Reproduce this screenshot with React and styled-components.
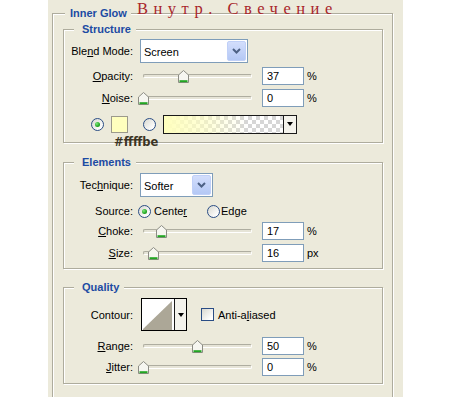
import React from 'react';
import styled, { createGlobalStyle } from 'styled-components';

const BG = '#ECEADB';

const GlobalStyle = createGlobalStyle`
  html, body { margin: 0; padding: 0; background: #fff; overflow: hidden; }
  body {
    font-family: "Liberation Sans", Arial, sans-serif;
    font-size: 11px;
    color: #000;
  }
`;

const Panel = styled.div`
  position: relative;
  margin-left: 48px;
  width: 355px;
  height: 397px;
  box-sizing: border-box;
  padding: 6px 10px 0 4px;
  background: ${BG};
  overflow: hidden;
`;

const OuterGroup = styled.fieldset`
  margin: 0;
  min-width: 0;
  padding: 0 9px 40px 10px;
  border: 1px solid #aeac9d;
  box-shadow: inset 1px 1px 0 #fff, 1px 1px 0 #fff;
`;

const Group = styled.fieldset`
  margin: ${p => p.$mt}px 0 0 0;
  min-width: 0;
  padding: ${p => p.$pt}px 0 ${p => p.$pb}px 0;
  border: 1px solid #aeac9d;
  box-shadow: inset 1px 1px 0 #fff, 1px 1px 0 #fff;
`;

const Legend = styled.legend`
  margin-left: ${p => p.$ml}px;
  padding: 0 ${p => p.$pr}px 0 ${p => p.$pl}px;
  font-weight: bold;
  font-size: 11px;
  line-height: 14px;
  color: #1c4ba3;
  background: ${BG};
`;

const RedNote = styled.div`
  position: absolute;
  left: 89px;
  top: 0;
  font-family: "Liberation Serif", "Times New Roman", serif;
  font-size: 16.5px;
  line-height: 18.5px;
  letter-spacing: 5.5px;
  color: #a8262b;
  white-space: nowrap;
`;

const HexNote = styled.div`
  position: absolute;
  left: 66px;
  top: 136px;
  font-family: "DejaVu Sans", Verdana, sans-serif;
  font-weight: bold;
  font-size: 11.5px;
  line-height: 13px;
  color: #3b3424;
  white-space: nowrap;
`;

const Row = styled.div`
  display: flex;
  align-items: center;
  height: ${p => p.$h || 18}px;
  margin-top: ${p => p.$mt || 0}px;
  padding-left: ${p => p.$indent || 0}px;
`;

const Label = styled.span`
  flex: none;
  width: 69px;
  margin-right: ${p => (p.$gap === undefined ? 7 : p.$gap)}px;
  text-align: right;
  white-space: nowrap;
`;

const U = styled.span`
  text-decoration: underline;
`;

const Select = styled.div`
  flex: none;
  display: flex;
  width: ${p => p.$w}px;
  height: 24px;
  box-sizing: border-box;
  border: 1px solid #7f9db9;
  background: #fff;
  padding: 1px;
`;

const SelectText = styled.span`
  flex: 1;
  display: flex;
  align-items: center;
  padding-left: 2px;
  padding-top: 1px;
`;

const DropBtn = styled.span`
  flex: none;
  width: 19px;
  box-sizing: border-box;
  border: 1px solid #c0d0f8;
  border-radius: 2px;
  background: linear-gradient(#d3defc, #b4c8f5);
  display: flex;
  align-items: center;
  justify-content: center;
`;

const Slider = styled.div`
  position: relative;
  flex: none;
  display: flex;
  align-items: center;
  width: 113px;
  height: 18px;
  box-sizing: border-box;
  padding: 0 1px 0 3px;
  margin-right: 9px;
`;

const Track = styled.div`
  flex: 1;
  height: 4px;
  box-sizing: border-box;
  border: 1px solid;
  border-color: #aeada0 #fff #fff #aeada0;
  border-radius: 2px;
  background: #e6e4d7;
`;

const Thumb = styled.div`
  position: absolute;
  top: 3px;
  width: 11px;
  height: 13px;
  display: flex;
`;

const NumField = styled.input`
  flex: none;
  width: 42px;
  height: 18px;
  box-sizing: border-box;
  margin: 0;
  border: 1px solid #7f9db9;
  background: #fff;
  padding: 0 0 0 4px;
  font-family: inherit;
  font-size: 11px;
  color: #000;
  outline: none;
`;

const Unit = styled.span`
  margin-left: 3px;
`;

const Radio = styled.span`
  flex: none;
  width: 13px;
  height: 13px;
  box-sizing: border-box;
  border-radius: 50%;
  border: 1px solid #2a4d85;
  background: linear-gradient(135deg, #d8d8d0 0%, #fff 85%);
  display: flex;
  align-items: center;
  justify-content: center;
  margin-right: ${p => p.$mr || 0}px;
  &::after {
    content: '';
    display: ${p => (p.$checked ? 'block' : 'none')};
    width: 5px;
    height: 5px;
    border-radius: 50%;
    background: radial-gradient(circle at 35% 35%, #7ce67c, #22a622 60%, #168a16);
  }
`;

const RadioText = styled.span`
  margin-right: ${p => p.$mr || 0}px;
`;

const Swatch = styled.span`
  flex: none;
  width: 17px;
  height: 17px;
  box-sizing: border-box;
  border: 1px solid #9c9a8c;
  background: #ffffbe;
  margin-right: 15px;
`;

const GradientBox = styled.div`
  flex: none;
  display: flex;
  width: 134px;
  height: 19px;
  box-sizing: border-box;
  border: 1px solid #1a1a1a;
`;

const GradientFill = styled.div`
  flex: 1;
  background:
    linear-gradient(to right, #ffffbe 0%, rgba(255, 255, 190, 0.6) 35%, rgba(255, 255, 190, 0) 70%),
    repeating-conic-gradient(#d6d6d6 0 25%, #fff 0 50%) 0 0 / 8px 8px;
`;

const ArrowCell = styled.div`
  flex: none;
  width: ${p => p.$w}px;
  border-left: 1px solid #1a1a1a;
  background: #f4f3ec;
  display: flex;
  align-items: center;
  justify-content: center;
  &::after {
    content: '';
    border-left: 3px solid transparent;
    border-right: 3px solid transparent;
    border-top: 4px solid #000;
  }
`;

const ContourBox = styled.div`
  flex: none;
  display: flex;
  height: 33px;
  box-sizing: border-box;
  border: 1px solid #000;
  background: #fff;
  margin-right: 14px;
`;

const ContourSwatch = styled.div`
  width: 32px;
  display: flex;
`;

const Checkbox = styled.span`
  flex: none;
  width: 13px;
  height: 13px;
  box-sizing: border-box;
  border: 1px solid #2a4d85;
  background: linear-gradient(135deg, #d8d8d0 0%, #fff 85%);
  margin-right: 4px;
`;

function Chevron() {
  return (
    <svg width="9" height="6" viewBox="0 0 9 6">
      <path d="M1 1 L4.5 4.5 L8 1" fill="none" stroke="#4d6185" strokeWidth="2" />
    </svg>
  );
}

function ThumbIcon() {
  return (
    <svg width="11" height="13" viewBox="0 0 11 13">
      <path d="M0.5 5 L5.5 0.5 L10.5 5 V12.5 H0.5 Z" fill="#f6f6f0" stroke="#8c8c84" />
      <path d="M1.5 11.2 H9.5" stroke="#22a622" strokeWidth="2" />
    </svg>
  );
}

function SliderRow({ label, value, unit, pos, mt }) {
  return (
    <Row $mt={mt}>
      <Label>{label}</Label>
      <Slider>
        <Track />
        <Thumb style={{ left: `${3 + pos * 109 - 5.5}px` }}>
          <ThumbIcon />
        </Thumb>
      </Slider>
      <NumField readOnly value={value} />
      <Unit>{unit}</Unit>
    </Row>
  );
}

export default function App() {
  return (
    <>
      <GlobalStyle />
      <Panel>
        <OuterGroup>
          <Legend $ml={2} $pl={5} $pr={4}>Inner Glow</Legend>

          <Group $mt={2} $pt={3} $pb={9}>
            <Legend $ml={10} $pl={8} $pr={5}>Structure</Legend>
            <Row $h={24}>
              <Label>Ble<U>n</U>d Mode:</Label>
              <Select $w={108}>
                <SelectText>Screen</SelectText>
                <DropBtn><Chevron /></DropBtn>
              </Select>
            </Row>
            <SliderRow mt={4} label={<><U>O</U>pacity:</>} value="37" unit="%" pos={0.37} />
            <SliderRow mt={4} label={<><U>N</U>oise:</>} value="0" unit="%" pos={0} />
            <Row $mt={8} $indent={27}>
              <Radio $checked $mr={7} />
              <Swatch />
              <Radio $mr={7} />
              <GradientBox>
                <GradientFill />
                <ArrowCell $w={12} />
              </GradientBox>
            </Row>
          </Group>

          <Group $mt={12} $pt={4} $pb={6}>
            <Legend $ml={10} $pl={8} $pr={5}>Elements</Legend>
            <Row $h={24}>
              <Label>Tec<U>h</U>nique:</Label>
              <Select $w={73}>
                <SelectText>Softer</SelectText>
                <DropBtn><Chevron /></DropBtn>
              </Select>
            </Row>
            <Row $mt={5}>
              <Label $gap={5}>Source:</Label>
              <Radio $checked $mr={3} />
              <RadioText $mr={20}>Cente<U>r</U></RadioText>
              <Radio $mr={1} />
              <RadioText>Ed<U>g</U>e</RadioText>
            </Row>
            <SliderRow mt={2} label={<><U>C</U>hoke:</>} value="17" unit="%" pos={0.17} />
            <SliderRow mt={4} label={<><U>S</U>ize:</>} value="16" unit="px" pos={0.1} />
          </Group>

          <Group $mt={11} $pt={4} $pb={7}>
            <Legend $ml={10} $pl={8} $pr={5}>Quality</Legend>
            <Row $h={33}>
              <Label $gap={8}>Contour:</Label>
              <ContourBox>
                <ContourSwatch>
                  <svg width="32" height="31" viewBox="0 0 32 31">
                    <polygon points="1,30 30,2 30,31 1,31" fill="#aca797" />
                  </svg>
                </ContourSwatch>
                <ArrowCell $w={11} />
              </ContourBox>
              <Checkbox />
              <span>Anti-a<U>l</U>iased</span>
            </Row>
            <SliderRow mt={6} label={<><U>R</U>ange:</>} value="50" unit="%" pos={0.5} />
            <SliderRow mt={3} label={<><U>J</U>itter:</>} value="0" unit="%" pos={0} />
          </Group>
        </OuterGroup>

        <RedNote>Внутр. Свечение</RedNote>
        <HexNote>#ffffbe</HexNote>
      </Panel>
    </>
  );
}
